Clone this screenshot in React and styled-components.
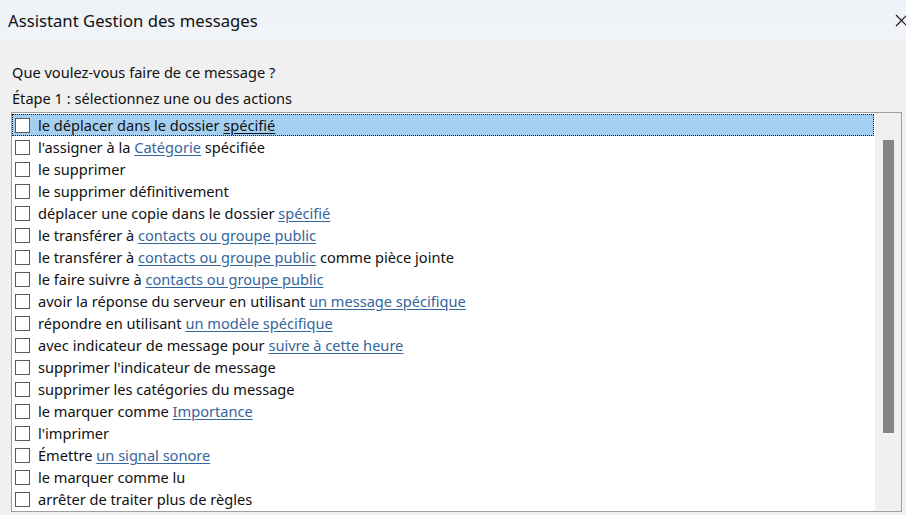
import React from 'react'
import styled, { createGlobalStyle } from 'styled-components'

const actions = [
  [['le déplacer dans le dossier '], ['spécifié', 'sel']],
  [["l'assigner à la "], ['Catégorie', 'link'], [' spécifiée']],
  [['le supprimer']],
  [['le supprimer définitivement']],
  [['déplacer une copie dans le dossier '], ['spécifié', 'link']],
  [['le transférer à '], ['contacts ou groupe public', 'link']],
  [['le transférer à '], ['contacts ou groupe public', 'link'], [' comme pièce jointe']],
  [['le faire suivre à '], ['contacts ou groupe public', 'link']],
  [['avoir la réponse du serveur en utilisant '], ['un message spécifique', 'link']],
  [['répondre en utilisant '], ['un modèle spécifique', 'link']],
  [['avec indicateur de message pour '], ['suivre à cette heure', 'link']],
  [["supprimer l'indicateur de message"]],
  [['supprimer les catégories du message']],
  [['le marquer comme '], ['Importance', 'link']],
  [["l'imprimer"]],
  [['Émettre '], ['un signal sonore', 'link']],
  [['le marquer comme lu']],
  [['arrêter de traiter plus de règles']],
]

export default function App() {
  return (
    <>
      <Global />
      <Window>
        <TitleBar>
          <Title>Assistant Gestion des messages</Title>
          <Close>
            <svg width="13" height="13" viewBox="0 0 13 13">
              <path d="M1 1L12 12M12 1L1 12" stroke="#1a1a1a" strokeWidth="1.2" fill="none" />
            </svg>
          </Close>
        </TitleBar>
        <Body>
          <Label first>Que voulez-vous faire de ce message ?</Label>
          <Label>Étape 1 : sélectionnez une ou des actions</Label>
          <ListBox>
            <Rows>
              {actions.map((parts, i) => (
                <Row key={i} selected={i === 0}>
                  <Check />
                  <RowText>
                    {parts.map(([txt, kind], j) =>
                      kind === 'link' ? <Link key={j}>{txt}</Link>
                      : kind === 'sel' ? <SelLink key={j}>{txt}</SelLink>
                      : <span key={j}>{txt}</span>
                    )}
                  </RowText>
                </Row>
              ))}
            </Rows>
            <ScrollTrack>
              <Thumb />
            </ScrollTrack>
          </ListBox>
        </Body>
      </Window>
    </>
  )
}

const Global = createGlobalStyle`
  html, body {
    margin: 0;
    padding: 0;
    background: #f0f0f0;
  }
  body {
    font-family: "Noto Sans", "Open Sans", sans-serif;
    overflow: hidden;
  }
`

const Window = styled.div`
  width: 906px;
  height: 515px;
  display: flex;
  flex-direction: column;
  background: #f0f0f0;
  overflow: hidden;
`

const TitleBar = styled.div`
  height: 41px;
  flex-shrink: 0;
  display: flex;
  align-items: center;
  justify-content: space-between;
  padding-left: 8px;
  background: linear-gradient(#eef3f9, #f1f4f8);
`

const Title = styled.div`
  font-size: 16.7px;
  color: #111;
  margin-top: -1px;
`

const Close = styled.div`
  width: 13px;
  margin-right: -2px;
  display: flex;
`

const Body = styled.div`
  display: flex;
  flex-direction: column;
  padding: 0 4px 0 11px;
`

const Label = styled.div`
  font-size: 14.6px;
  color: #111;
  height: 26px;
  line-height: 26px;
  padding-left: 1px;
  margin-top: ${p => (p.first ? '18px' : '0')};
`

const ListBox = styled.div`
  margin-top: 1px;
  height: 400px;
  box-sizing: border-box;
  border: 1px solid #a0a0a0;
  background: #fff;
  display: flex;
  padding: 1px 0 0 0;
`

const Rows = styled.div`
  flex: 1;
  display: flex;
  flex-direction: column;
`

const Row = styled.div`
  height: 22px;
  flex-shrink: 0;
  display: flex;
  align-items: center;
  margin-right: 1px;
  box-sizing: border-box;
  background: ${p => (p.selected ? '#a5cff1' : 'transparent')};
  border: 1px dotted ${p => (p.selected ? '#1a1a1a' : 'transparent')};
`

const Check = styled.div`
  width: 13px;
  height: 13px;
  border: 1px solid #5a5a5a;
  background: #fff;
  margin-left: 2px;
  margin-right: 8px;
  flex-shrink: 0;
`

const RowText = styled.div`
  font-size: 14.6px;
  color: #111;
  white-space: nowrap;
`

const Link = styled.span`
  color: #34659c;
  text-decoration: underline;
  text-underline-offset: 2px;
`

const SelLink = styled.span`
  text-decoration: underline;
  text-underline-offset: 2px;
`

const ScrollTrack = styled.div`
  width: 26px;
  margin-top: -1px;
  background: #f0f0f0;
  display: flex;
  justify-content: center;
  padding-top: 27px;
  padding-bottom: 4px;
`

const Thumb = styled.div`
  width: 11px;
  height: 293px;
  background: #858585;
`
